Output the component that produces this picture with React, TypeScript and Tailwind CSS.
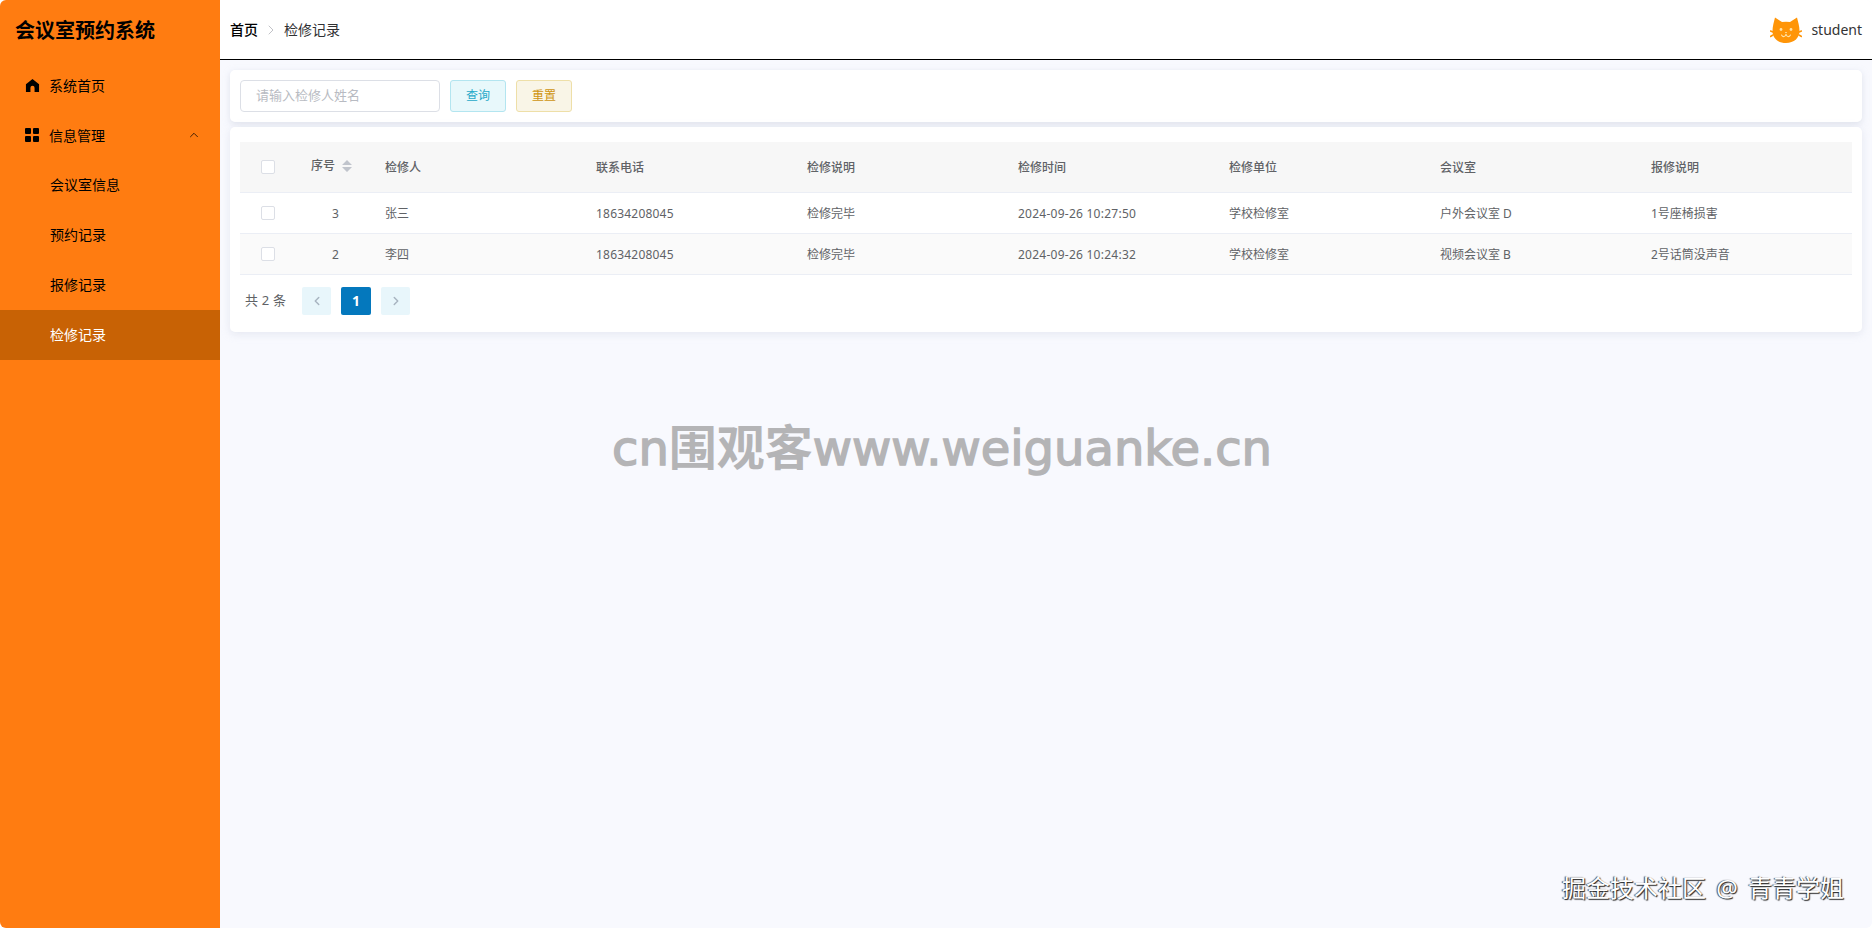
import { ChevronLeft, ChevronRight, ChevronUp } from 'lucide-react'

const rows = [
  { id: 3, name: '张三', phone: '18634208045', note: '检修完毕', time: '2024-09-26 10:27:50', unit: '学校检修室', room: '户外会议室 D', report: '1号座椅损害' },
  { id: 2, name: '李四', phone: '18634208045', note: '检修完毕', time: '2024-09-26 10:24:32', unit: '学校检修室', room: '视频会议室 B', report: '2号话筒没声音' },
]

const heads = ['检修人', '联系电话', '检修说明', '检修时间', '检修单位', '会议室', '报修说明']

function HomeIcon() {
  return (
    <svg viewBox="0 0 16 16" className="w-[15px] h-[15px]">
      <path d="M8 1 15 6.6V15H10.2V10.4A2.2 2.2 0 0 0 5.8 10.4V15H1V6.6Z" fill="#000" />
    </svg>
  )
}

function GridIcon() {
  return (
    <svg viewBox="0 0 14 14" className="w-[14px] h-[14px]">
      <rect x="0" y="0" width="6" height="6" rx="1" fill="#000" />
      <rect x="8" y="0" width="6" height="6" rx="1" fill="#000" />
      <rect x="0" y="8" width="6" height="6" rx="1" fill="#000" />
      <rect x="8" y="8" width="6" height="6" rx="1" fill="#000" />
    </svg>
  )
}

function CatIcon() {
  return (
    <svg viewBox="0 0 32 26" className="w-8 h-[26px]">
      <path d="M5 0.500 12 5Q16 4.400 20 5L27 0.500C28 5 29.500 9 29.500 14C29.500 21 24 26 16 26S2.500 21 2.500 14C2.500 9 4 5 5 0.500Z" fill="#ff9508" />
      <path d="M3 15 0.500 14M3 18 0.500 19.500M29 15 31.500 14M29 18 31.500 19.500" stroke="#ff9508" strokeWidth="1.500" strokeLinecap="round" />
      <circle cx="11" cy="12.500" r="1.400" fill="#ffe2a8" />
      <circle cx="21" cy="12.500" r="1.400" fill="#ffe2a8" />
      <path d="M14.800 15H17.200L16 16.500Z" fill="#ffe2a8" />
      <path d="M11.500 18C13 20.500 15.500 20 16 17C16.500 20 19 20.500 20.500 18" fill="none" stroke="#ffe2a8" strokeWidth="1.100" strokeLinecap="round" />
    </svg>
  )
}

function Checkbox() {
  return <span className="block w-[14px] h-[14px] rounded-[2px] border border-[#dcdfe6] bg-white mx-auto" />
}

function Sidebar() {
  return (
    <aside className="w-[220px] shrink-0 bg-[#ff7c11] text-black">
      <div className="h-[60px] pl-[15px] pt-[2px] flex items-center text-[20px] font-bold leading-none">会议室预约系统</div>
      <div className="h-[50px] pl-[25px] flex items-center gap-[9px] text-[14px]">
        <HomeIcon />
        <span>系统首页</span>
      </div>
      <div className="h-[50px] pl-[25px] pr-[19px] flex items-center gap-[10px] text-[14px]">
        <GridIcon />
        <span>信息管理</span>
        <ChevronUp size={14} strokeWidth={1.25} className="ml-auto" />
      </div>
      {['会议室信息', '预约记录', '报修记录'].map((item) => (
        <div key={item} className="h-[50px] pl-[50px] pb-[2px] flex items-center text-[14px]">{item}</div>
      ))}
      <div className="h-[50px] pl-[50px] pb-[2px] flex items-center text-[14px] bg-[#c86205] text-white">检修记录</div>
    </aside>
  )
}

function Header() {
  return (
    <header className="h-[60px] bg-white border-b border-black flex items-center justify-between pl-[10px] pr-[10px]">
      <div className="flex items-center text-[14px] text-[#303133]">
        <span className="font-medium text-black">首页</span>
        <ChevronRight size={16} strokeWidth={1.25} className="mx-[5px] text-[#b4b6bc]" />
        <span>检修记录</span>
      </div>
      <div className="flex items-center gap-[9px] text-[14px] text-[#333]">
        <CatIcon />
        <span>student</span>
      </div>
    </header>
  )
}

function SearchBar() {
  return (
    <div className="h-[52px] bg-white rounded-[5px] shadow-[0_2px_6px_rgba(200,205,220,0.5)] flex items-center px-[10px] gap-[10px]">
      <div className="w-[200px] h-[32px] border border-[#dcdfe6] rounded-[4px] pl-[15px] flex items-center text-[13px] text-[#b8bbc2]">请输入检修人姓名</div>
      <button className="w-[56px] h-[32px] rounded-[3px] border border-[#b3e5f0] bg-[#e8f8fb] text-[12px] text-[#26a9c9]">查询</button>
      <button className="w-[56px] h-[32px] rounded-[3px] border border-[#eedfa8] bg-[#f9f5e7] text-[12px] text-[#cf9410]">重置</button>
    </div>
  )
}

function RepairTable() {
  return (
    <div className="h-[205px] bg-white rounded-[5px] shadow-[0_2px_8px_rgba(200,205,220,0.4)] pt-[15px] px-[10px]">
      <table className="w-full table-fixed border-collapse text-[12px] text-[#606266]">
        <colgroup>
          <col className="w-[56px]" />
          <col className="w-[79px]" />
          {heads.map((head) => <col key={head} />)}
        </colgroup>
        <thead>
          <tr className="h-[50px] bg-[#f7f7f7] border-b border-[#ebeef5]">
            <th><Checkbox /></th>
            <th className="font-medium text-center">
              <span className="inline-flex items-center gap-[7px] -translate-y-[1px] -translate-x-[4px]">
                序号
                <svg viewBox="0 0 10 12" className="w-[10px] h-[12px]">
                  <path d="M5 0 10 5H0Z M0 7H10L5 12Z" fill="#c0c4cc" />
                </svg>
              </span>
            </th>
            {heads.map((head) => (
              <th key={head} className="font-medium text-left pl-[10px] pt-[2px]">{head}</th>
            ))}
          </tr>
        </thead>
        <tbody>
          {rows.map((row, i) => (
            <tr key={row.id} className={`h-[41px] border-b border-[#ebeef5] ${i === 1 ? 'bg-[#fafafa]' : 'bg-white'}`}>
              <td><Checkbox /></td>
              <td className="text-center pt-[2px]">{row.id}</td>
              <td className="pl-[10px] pt-[2px]">{row.name}</td>
              <td className="pl-[10px] pt-[2px] tracking-[0.2px]">{row.phone}</td>
              <td className="pl-[10px] pt-[2px]">{row.note}</td>
              <td className="pl-[10px] pt-[2px] tracking-[0.25px]">{row.time}</td>
              <td className="pl-[10px] pt-[2px]">{row.unit}</td>
              <td className="pl-[10px] pt-[2px]">{row.room}</td>
              <td className="pl-[10px] pt-[2px]">{row.report}</td>
            </tr>
          ))}
        </tbody>
      </table>
      <div className="mt-[12px] pl-[5px] flex items-center text-[13px] text-[#606266]">
        <span className="w-[57px] tracking-[0.2px]">共 2 条</span>
        <span className="w-[29px] h-[28px] rounded-[2px] bg-[#e8f6fb] flex items-center justify-center text-[#a8b4c0]"><ChevronLeft size={14} strokeWidth={2.5} /></span>
        <span className="ml-[10px] w-[30px] h-[28px] rounded-[2px] bg-[#0478bd] text-white font-bold text-[14px] flex items-center justify-center">1</span>
        <span className="ml-[10px] w-[29px] h-[28px] rounded-[2px] bg-[#e8f6fb] flex items-center justify-center text-[#a8b4c0]"><ChevronRight size={14} strokeWidth={2.5} /></span>
      </div>
    </div>
  )
}

export default function App() {
  return (
    <div className="relative h-[928px] flex overflow-hidden rounded-[6px] bg-[#f8f9fe] font-['Noto_Sans','Noto_Sans_CJK_SC',sans-serif]">
      <Sidebar />
      <main className="flex-1 min-w-0">
        <Header />
        <div className="px-[10px] pt-[10px] flex flex-col gap-[5px]">
          <SearchBar />
          <RepairTable />
        </div>
      </main>

      {/* watermarks sit over the page */}
      <div className="absolute left-[612px] top-[420px] h-[56px] flex items-center whitespace-nowrap text-[#b4b4b6] font-['DejaVu_Sans','Noto_Sans_CJK_SC',sans-serif] text-[48px] leading-[56px] [-webkit-text-stroke:1.5px_#b4b4b6]">
        <span>cn</span>
        <span className="font-bold [-webkit-text-stroke:0]">围观客</span>
        <span>www.weiguanke.cn</span>
      </div>
      <div className="absolute left-[1562px] top-[871px] text-[24px] leading-[34px] whitespace-nowrap text-white [word-spacing:4px] [text-shadow:1px_1px_1px_#222,-1px_0_1px_#444]">掘金技术社区 @ 青青学姐</div>
    </div>
  )
}
